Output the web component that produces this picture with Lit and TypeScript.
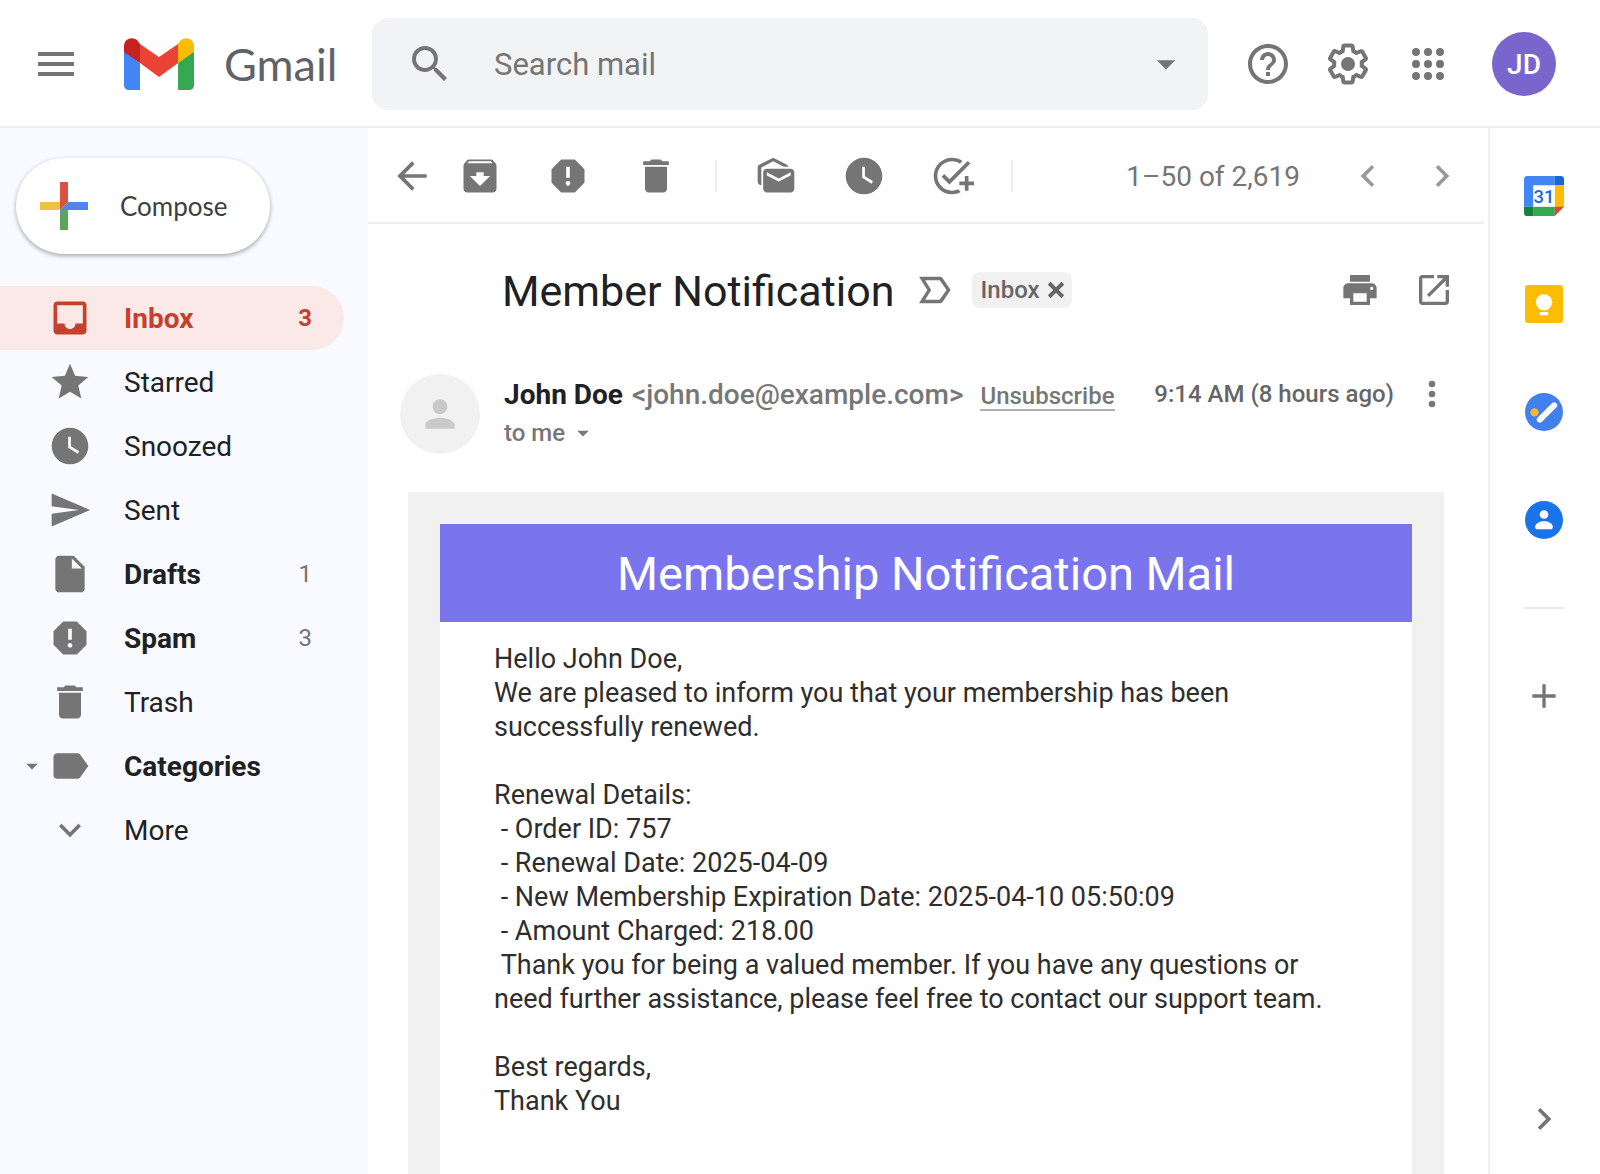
import { LitElement, html, svg, css, nothing, type TemplateResult } from "lit";
import { customElement, property } from "lit/decorators.js";

const ICONS: Record<string, TemplateResult> = {
  menu: svg`<path d="M3 18h18v-2H3v2zm0-5h18v-2H3v2zm0-7v2h18V6H3z"/>`,
  search: svg`<path d="M15.5 14h-.79l-.28-.27A6.47 6.47 0 0 0 16 9.5 6.5 6.5 0 1 0 9.5 16c1.61 0 3.09-.59 4.23-1.57l.27.28v.79l5 4.99L20.49 19l-4.99-5zm-6 0C7.01 14 5 11.99 5 9.5S7.01 5 9.5 5 14 7.01 14 9.5 11.99 14 9.5 14z"/>`,
  caret: svg`<path d="M7 10l5 5 5-5z"/>`,
  help: svg`<path d="M11 18h2v-2h-2v2zm1-16C6.48 2 2 6.48 2 12s4.48 10 10 10 10-4.48 10-10S17.52 2 12 2zm0 18c-4.41 0-8-3.59-8-8s3.59-8 8-8 8 3.59 8 8-3.59 8-8 8zm0-14c-2.21 0-4 1.79-4 4h2c0-1.1.9-2 2-2s2 .9 2 2c0 2-3 1.75-3 5h2c0-2.25 3-2.5 3-5 0-2.21-1.79-4-4-4z"/>`,
  settings: svg`<path d="M13.85 22.25h-3.7c-.74 0-1.36-.54-1.45-1.27l-.27-1.89c-.27-.14-.53-.29-.79-.46l-1.8.72c-.7.26-1.47-.03-1.81-.65L2.2 15.53c-.35-.66-.2-1.44.36-1.88l1.53-1.19c-.01-.15-.02-.3-.02-.46 0-.15.01-.31.02-.46l-1.52-1.19c-.59-.45-.74-1.26-.37-1.88l1.85-3.19c.34-.62 1.11-.9 1.79-.63l1.81.73c.26-.17.52-.32.78-.46l.27-1.91c.09-.7.71-1.25 1.44-1.25h3.7c.74 0 1.36.54 1.45 1.27l.27 1.89c.27.14.53.29.79.46l1.8-.72c.71-.26 1.48.03 1.82.65l1.84 3.18c.36.66.2 1.44-.36 1.88l-1.52 1.19c.01.15.02.3.02.46s-.01.31-.02.46l1.52 1.19c.56.45.72 1.23.37 1.86l-1.86 3.22c-.34.62-1.11.9-1.8.63l-1.8-.72c-.26.17-.52.32-.78.46l-.27 1.91c-.1.68-.72 1.22-1.46 1.22zm-3.23-2h2.76l.37-2.55.53-.22c.44-.18.88-.44 1.34-.78l.45-.34 2.38.96 1.38-2.4-2.03-1.58.07-.56c.03-.26.06-.51.06-.78s-.03-.53-.06-.78l-.07-.56 2.03-1.58-1.39-2.4-2.39.96-.45-.35c-.42-.32-.87-.58-1.33-.77l-.52-.22-.37-2.55h-2.76l-.37 2.55-.53.21c-.44.19-.88.44-1.34.79l-.45.33-2.38-.95-1.39 2.39 2.03 1.58-.07.56a7 7 0 0 0-.06.79c0 .26.02.53.06.78l.07.56-2.03 1.58 1.38 2.4 2.39-.96.45.35c.43.33.86.58 1.33.77l.53.22.38 2.55z"/><circle cx="12" cy="12" r="3.5"/>`,
  apps: svg`${[6, 12, 18].map((y) => [6, 12, 18].map((x) => svg`<circle cx=${x} cy=${y} r="2"/>`))}`,
  inbox: svg`<path d="M19 3H5c-1.1 0-2 .9-2 2v14c0 1.1.89 2 2 2h14c1.1 0 2-.9 2-2V5c0-1.1-.9-2-2-2zm0 12h-4c0 1.66-1.35 3-3 3s-3-1.34-3-3H5V5h14v10z"/>`,
  star: svg`<path d="M12 17.27L18.18 21l-1.64-7.03L22 9.24l-7.19-.61L12 2 9.19 8.63 2 9.24l5.46 4.73L5.82 21z"/>`,
  clock: svg`<path d="M12 2C6.5 2 2 6.5 2 12s4.5 10 10 10 10-4.5 10-10S17.5 2 12 2zm4.2 14.2L11 13V7h1.5v5.2l4.5 2.7-.8 1.3z"/>`,
  send: svg`<path d="M2.01 21L23 12 2.01 3 2 10l15 2-15 2z"/>`,
  draft: svg`<path d="M6 2c-1.1 0-2 .9-2 2v16c0 1.1.9 2 2 2h12c1.1 0 2-.9 2-2V8l-6-6H6zm7 7V3.5L18.5 9H13z"/>`,
  spam: svg`<path d="M15.73 3H8.27L3 8.27v7.46L8.27 21h7.46L21 15.73V8.27L15.73 3zM12 17.3a1.3 1.3 0 1 1 0-2.6 1.3 1.3 0 0 1 0 2.6zm1-4.3h-2V7h2v6z"/>`,
  trash: svg`<path d="M6 19c0 1.1.9 2 2 2h8c1.1 0 2-.9 2-2V7H6v12zM19 4h-3.5l-1-1h-5l-1 1H5v2h14V4z"/>`,
  label: svg`<path d="M17.63 5.84C17.27 5.33 16.67 5 16 5L5 5.01C3.9 5.01 3 5.9 3 7v10c0 1.1.9 1.99 2 1.99L16 19c.67 0 1.27-.33 1.63-.84L22 12l-4.37-6.16z"/>`,
  down: svg`<path d="M16.59 8.59L12 13.17 7.41 8.59 6 10l6 6 6-6z"/>`,
  back: svg`<path d="M20 11H7.83l5.59-5.59L12 4l-8 8 8 8 1.41-1.41L7.83 13H20v-2z"/>`,
  archive: svg`<path d="M20.54 5.23l-1.39-1.68C18.88 3.21 18.47 3 18 3H6c-.47 0-.88.21-1.16.55L3.46 5.23C3.17 5.57 3 6.02 3 6.5V19c0 1.1.9 2 2 2h14c1.1 0 2-.9 2-2V6.5c0-.48-.17-.93-.46-1.27zM12 17.5L6.5 12H10v-2h4v2h3.5L12 17.5zM5.12 5l.81-1h12l.94 1H5.12z"/>`,
  unread: svg`<path d="M18.83 7h-2.6L10.5 4 4 7.4V17c-1.1 0-2-.9-2-2V7.17c0-.53.32-1.09.8-1.34L10.5 2l7.54 3.83c.43.23.73.7.79 1.17z"/><path d="M20 8H7c-1.1 0-2 .9-2 2v9c0 1.1.9 2 2 2h13c1.1 0 2-.9 2-2v-9c0-1.1-.9-2-2-2zm0 3.67L13.5 15 7 11.67V10l6.5 3.33L20 10v1.67z"/>`,
  task: svg`<path d="M22 5.18L10.59 16.6l-4.24-4.24 1.41-1.41 2.83 2.83 10-10L22 5.18zM12 20c-4.41 0-8-3.59-8-8s3.59-8 8-8c1.57 0 3.04.46 4.28 1.25l1.45-1.45A10.02 10.02 0 0 0 12 2C6.48 2 2 6.48 2 12s4.48 10 10 10c1.73 0 3.36-.44 4.78-1.22l-1.5-1.5c-1 .46-2.11.72-3.28.72zm7-5h-3v2h3v3h2v-3h3v-2h-3v-3h-2v3z"/>`,
  left: svg`<path d="M15.41 7.41L14 6l-6 6 6 6 1.41-1.41L10.83 12z"/>`,
  right: svg`<path d="M10 6L8.59 7.41 13.17 12l-4.58 4.59L10 18l6-6z"/>`,
  important: svg`<path fill-rule="evenodd" d="M3 4h12.5c.7 0 1.3.3 1.7.9L22 12l-4.8 7.1c-.4.6-1 .9-1.7.9H3l5-8zm3.7 2.1L10.3 12l-3.6 5.9h8.7l4.1-5.9-4.1-5.9z"/>`,
  close: svg`<path d="M19 7.4L16.6 5 12 9.6 7.4 5 5 7.4 9.6 12 5 16.6 7.4 19l4.6-4.6 4.6 4.6 2.4-2.4-4.6-4.6z"/>`,
  print: svg`<path d="M19 8H5c-1.66 0-3 1.34-3 3v6h4v4h12v-4h4v-6c0-1.66-1.34-3-3-3zm-3 11H8v-5h8v5zm3-7c-.55 0-1-.45-1-1s.45-1 1-1 1 .45 1 1-.45 1-1 1zm-1-9H6v4h12V3z"/>`,
  open: svg`<path d="M19 19H5V5h7V3H5c-1.11 0-2 .9-2 2v14c0 1.1.89 2 2 2h14c1.1 0 2-.9 2-2v-7h-2v7zM14 3v2h3.59l-9.83 9.83 1.41 1.41L19 6.41V10h2V3h-7z"/>`,
  more: svg`<circle cx="12" cy="6" r="2"/><circle cx="12" cy="12" r="2"/><circle cx="12" cy="18" r="2"/>`,
  person: svg`<path d="M12 12c2.21 0 4-1.79 4-4s-1.79-4-4-4-4 1.79-4 4 1.79 4 4 4zm0 2c-2.67 0-8 1.34-8 4v2h16v-2c0-2.66-5.33-4-8-4z"/>`,
  plus: svg`<path d="M19 13h-6v6h-2v-6H5v-2h6V5h2v6h6v2z"/>`,
  compose: svg`<path fill="#db5044" d="M10 0h4v10l-4 4z"/><path fill="#f1bf42" d="M0 10h10v4H0z"/><path fill="#58a55c" d="M10 14h4v10h-4z"/><path fill="#5086ec" d="M14 10h10v4H10z"/>`,
  calendar: svg`<path fill="#fff" d="M5 5h14v14H5z"/><path fill="#4285f4" d="M2 0h16.5v5.5h-13v13H0V2a2 2 0 0 1 2-2z"/><path fill="#1967d2" d="M18.5 0H22a2 2 0 0 1 2 2v3.5h-5.5z"/><path fill="#fbbc04" d="M18.5 5.5H24v13h-5.5z"/><path fill="#34a853" d="M5.5 18.5h13V24h-13z"/><path fill="#188038" d="M0 18.5h5.5V24H2a2 2 0 0 1-2-2z"/><path fill="#ea4335" d="M18.5 18.5H24L18.5 24z"/><text x="12" y="16" text-anchor="middle" font-family="Roboto, sans-serif" font-size="11" font-weight="500" fill="#1967d2">31</text>`,
  keep: svg`<rect x=".6" y=".6" width="22.8" height="22.8" rx="2" fill="#fbbc04"/><circle cx="12" cy="11" r="4.9" fill="#fff"/><path fill="#fff" d="M9.5 13h5v2.4h-5zM9.5 16.8h5v2h-5z"/>`,
  tasks: svg`<circle cx="12" cy="12" r="11.4" fill="#4380ee"/><path d="M9.5 16.6l8.6-8.6" stroke="#fff" stroke-width="3.6" stroke-linecap="round"/><circle cx="6.3" cy="12.2" r="2.5" fill="#f4b92a"/>`,
  contacts: svg`<circle cx="12" cy="12" r="11.4" fill="#1a73e8"/><circle cx="12" cy="8.7" r="2.6" fill="#fff"/><path fill="#fff" d="M6.7 16.2c0-2.4 3-3.5 5.3-3.5s5.3 1.1 5.3 3.5c0 .9-.5 1.4-1.3 1.4H8c-.8 0-1.3-.5-1.3-1.4z"/>`,
};

@customElement("ui-icon")
export class UiIcon extends LitElement {
  @property() name = "";

  static styles = css`
    :host {
      display: block;
      flex: none;
      width: 44px;
      height: 44px;
    }
    .glyph {
      display: block;
      width: 100%;
      height: 100%;
      fill: currentColor;
    }
  `;

  render() {
    return html`<svg class="glyph" viewBox="0 0 24 24" aria-hidden="true">${ICONS[this.name] ?? nothing}</svg>`;
  }
}

interface Folder {
  label: string;
  icon: string;
  count?: number;
  bold?: boolean;
  active?: boolean;
  caret?: boolean;
}

const FOLDERS: Folder[] = [
  { label: "Inbox", icon: "inbox", count: 3, bold: true, active: true },
  { label: "Starred", icon: "star" },
  { label: "Snoozed", icon: "clock" },
  { label: "Sent", icon: "send" },
  { label: "Drafts", icon: "draft", count: 1, bold: true },
  { label: "Spam", icon: "spam", count: 3, bold: true },
  { label: "Trash", icon: "trash" },
  { label: "Categories", icon: "label", bold: true, caret: true },
  { label: "More", icon: "down" },
];

const BODY = `Hello John Doe,
We are pleased to inform you that your membership has been successfully renewed.

Renewal Details:
 - Order ID: 757
 - Renewal Date: 2025-04-09
 - New Membership Expiration Date: 2025-04-10 05:50:09
 - Amount Charged: 218.00
 Thank you for being a valued member. If you have any questions or need further assistance, please feel free to contact our support team.

Best regards,
Thank You`;

@customElement("app-root")
export class AppRoot extends LitElement {
  static styles = css`
    :host {
      display: flex;
      flex-direction: column;
      height: 100vh;
      overflow: hidden;
      background: #fff;
      color: #202124;
      font: 400 28px/34px Roboto, sans-serif;
    }
    * {
      box-sizing: border-box;
    }
    button,
    input {
      display: block;
      margin: 0;
      padding: 0;
      border: 0;
      background: none;
      color: inherit;
      font: inherit;
    }
    button {
      cursor: pointer;
    }
    a {
      color: inherit;
      text-decoration: none;
    }
    h1,
    h2,
    p,
    ul {
      margin: 0;
      padding: 0;
      font-weight: 400;
      list-style: none;
    }
    .size-28 {
      width: 28px;
      height: 28px;
    }
    .size-40 {
      width: 40px;
      height: 40px;
    }
    .size-48 {
      width: 48px;
      height: 48px;
    }

    .header {
      flex: none;
      display: flex;
      align-items: center;
      height: 128px;
      padding: 2px 44px 0 32px;
      border-bottom: 2px solid #eeefef;
      color: #757575;
    }
    .brand {
      display: flex;
      align-items: center;
      gap: 30px;
      width: 248px;
      margin-left: 44px;
      color: #5f6368;
      font: 400 45px/56px Lato, sans-serif;
    }
    .logo {
      width: 70px;
      height: 52px;
    }
    .search {
      flex: 1;
      display: flex;
      align-items: center;
      height: 92px;
      padding: 0 20px 0 34px;
      border-radius: 16px;
      background: #f1f3f4;
    }
    .query {
      flex: 1;
      min-width: 0;
      height: 48px;
      margin-left: 40px;
      font-size: 31px;
    }
    .query::placeholder {
      color: #757575;
      opacity: 1;
    }
    .tools {
      display: flex;
      gap: 32px;
      margin: 0 40px 0 36px;
    }
    .me {
      width: 64px;
      height: 64px;
      padding-top: 2px;
      border-radius: 50%;
      background: #7966cc;
      color: #fff;
      font-weight: 500;
      text-align: center;
    }

    .columns {
      flex: 1;
      min-height: 0;
      display: flex;
    }
    .sidebar {
      flex: none;
      width: 368px;
      padding-top: 30px;
      background: #f9faff;
    }
    .compose {
      display: flex;
      align-items: center;
      gap: 32px;
      height: 96px;
      margin: 0 0 32px 16px;
      padding: 0 42px 0 24px;
      border-radius: 48px;
      background: #fff;
      box-shadow: 0 2px 4px rgba(60, 64, 67, 0.36), 0 1px 4px rgba(60, 64, 67, 0.12);
      color: #3c4043;
      font-family: Lato, sans-serif;
      font-size: 26px;
    }
    .folder {
      display: flex;
      align-items: center;
      width: 344px;
      height: 64px;
      padding-right: 32px;
      border-radius: 0 32px 32px 0;
    }
    .folder.active {
      background: #fae9e7;
      color: #c5402f;
    }
    .lead {
      display: flex;
      align-items: center;
      justify-content: flex-end;
      gap: 2px;
      width: 92px;
      color: #757575;
    }
    .active .lead {
      color: inherit;
    }
    .name {
      flex: 1;
      margin-left: 32px;
      padding-top: 2px;
    }
    .bold .name,
    .active .count {
      font-weight: 700;
    }
    .count {
      color: #757575;
      font-size: 24px;
    }
    .active .count {
      color: inherit;
    }

    .main {
      flex: 1;
      min-width: 0;
      display: flex;
      flex-direction: column;
    }
    .toolbar {
      flex: none;
      display: flex;
      align-items: center;
      height: 96px;
      margin-right: 4px;
      padding: 2px 20px 0 22px;
      border-bottom: 2px solid #eeefef;
      color: #757575;
    }
    .group {
      display: flex;
      gap: 44px;
      padding: 0 37px;
      border-right: 2px solid #eeeeee;
    }
    .group.first {
      padding-left: 24px;
    }
    .bar {
      display: flex;
      align-items: center;
      height: 32px;
    }
    .range {
      margin-left: auto;
      padding-top: 2px;
    }
    .pager {
      display: flex;
      gap: 30px;
      margin-left: 46px;
      color: #9a9a9a;
    }

    .subject {
      flex: none;
      display: flex;
      align-items: center;
      height: 132px;
      padding: 0 34px 0 134px;
      color: #757575;
    }
    .title {
      padding-top: 2px;
      color: #202124;
      font-size: 43px;
      line-height: 52px;
    }
    .flag {
      margin: 0 18px 0 20px;
    }
    .chip {
      display: flex;
      align-items: center;
      gap: 2px;
      height: 36px;
      padding: 0 2px 0 8px;
      border-radius: 8px;
      background: #f1f1f1;
      color: #666;
      font-size: 24px;
      font-weight: 500;
      line-height: 28px;
    }
    .actions {
      display: flex;
      gap: 34px;
      margin-left: auto;
    }

    .sender {
      flex: none;
      display: flex;
      align-items: flex-start;
      height: 136px;
      padding: 18px 36px 0 32px;
      color: #777;
      font-weight: 500;
    }
    .photo {
      flex: none;
      display: grid;
      place-items: center;
      width: 80px;
      height: 80px;
      margin-right: 24px;
      border-radius: 50%;
      background: #f1f1f1;
      color: #c9c9c9;
    }
    .who {
      flex: 1;
      min-width: 0;
    }
    .line {
      display: flex;
      align-items: baseline;
      gap: 9px;
      height: 42px;
      padding-top: 4px;
      white-space: nowrap;
    }
    .from {
      color: #202124;
      font-weight: 700;
    }
    .small {
      font-size: 24px;
    }
    .unsubscribe {
      margin-left: 8px;
      border-bottom: 2px solid #b0b0b0;
      line-height: 26px;
    }
    .time {
      flex: none;
      padding-top: 3px;
      color: #666;
    }
    .to {
      display: flex;
      align-items: center;
      gap: 4px;
    }
    .menu {
      margin-left: 18px;
    }

    .mail {
      flex: 1;
      min-height: 0;
      overflow: hidden;
      display: flex;
      margin: 0 44px 0 40px;
      padding: 32px 32px 0;
      background: #f1f1f1;
    }
    .letter {
      flex: 1;
      background: #fff;
    }
    .banner {
      padding: 22px 0 20px;
      background: #7b75ed;
      color: #fff;
      font-size: 47px;
      line-height: 56px;
      text-align: center;
    }
    .text {
      padding: 20px 54px;
      color: #2e2e2e;
      font-size: 27px;
      white-space: pre-wrap;
    }

    .rail {
      flex: none;
      display: flex;
      flex-direction: column;
      align-items: center;
      width: 112px;
      padding: 48px 2px 33px 0;
      border-left: 2px solid #eeefef;
      color: #757575;
    }
    .apps {
      display: flex;
      flex-direction: column;
      gap: 68px;
      padding-bottom: 67px;
      border-bottom: 2px solid #e8e8e8;
    }
    .add {
      margin-top: 67px;
    }
    .collapse {
      margin-top: auto;
    }
  `;

  private button(icon: string, label: string, size = "") {
    return html`<button type="button" aria-label=${label}><ui-icon class=${size} name=${icon}></ui-icon></button>`;
  }

  private header() {
    return html`
      <header class="header">
        ${this.button("menu", "Main menu", "size-48")}
        <a class="brand" href="#inbox">
          <svg class="logo" viewBox="0 0 70 52" aria-hidden="true">
            <path fill="#4285f4" d="M0 13l16 12v27H5c-3 0-5-2-5-5z" />
            <path fill="#34a853" d="M54 25l16-12v34c0 3-2 5-5 5H54z" />
            <path fill="#ea4335" d="M16 6l19 13L54 6v19L35 39 16 25z" />
            <path fill="#c5221f" d="M0 14V8c0-7 8-10 13.5-5.5L16 6v19L0 14z" />
            <path fill="#fbbc04" d="M70 14V8c0-7-8-10-13.5-5.5L54 6v19l16-11z" />
          </svg>
          <span>Gmail</span>
        </a>
        <form class="search" role="search">
          ${this.button("search", "Search", "size-48")}
          <input class="query" type="text" aria-label="Search mail" placeholder="Search mail" />
          ${this.button("caret", "Search options")}
        </form>
        <div class="tools">
          ${this.button("help", "Support", "size-48")} ${this.button("settings", "Settings", "size-48")}
          ${this.button("apps", "Apps", "size-48")}
        </div>
        <button class="me" type="button">JD</button>
      </header>
    `;
  }

  private folder(f: Folder) {
    return html`
      <li>
        <a class="folder ${f.active ? "active" : ""} ${f.bold ? "bold" : ""}" href="#${f.label.toLowerCase()}">
          <span class="lead">
            ${f.caret ? html`<ui-icon class="size-28" name="caret"></ui-icon>` : nothing}
            <ui-icon name=${f.icon}></ui-icon>
          </span>
          <span class="name">${f.label}</span>
          ${f.count ? html`<span class="count">${f.count}</span>` : nothing}
        </a>
      </li>
    `;
  }

  private toolbar() {
    return html`
      <div class="toolbar" role="toolbar" aria-label="Message actions">
        ${this.button("back", "Back to inbox")}
        <div class="bar">
          <div class="group first bar">
            ${this.button("archive", "Archive")} ${this.button("spam", "Report spam")} ${this.button("trash", "Delete")}
          </div>
          <div class="group bar">
            ${this.button("unread", "Mark as unread")} ${this.button("clock", "Snooze")}
            ${this.button("task", "Add to tasks")}
          </div>
        </div>
        <span class="range">1–50 of 2,619</span>
        <div class="pager">${this.button("left", "Newer")} ${this.button("right", "Older")}</div>
      </div>
    `;
  }

  render() {
    return html`
      ${this.header()}
      <div class="columns">
        <aside class="sidebar">
          <button class="compose" type="button"><ui-icon class="size-48" name="compose"></ui-icon>Compose</button>
          <nav aria-label="Folders">
            <ul>
              ${FOLDERS.map((f) => this.folder(f))}
            </ul>
          </nav>
        </aside>
        <main class="main">
          ${this.toolbar()}
          <div class="subject">
            <h1 class="title">Member Notification</h1>
            <ui-icon class="flag size-40" name="important"></ui-icon>
            <span class="chip">Inbox ${this.button("close", "Remove label Inbox", "size-28")}</span>
            <div class="actions">
              ${this.button("print", "Print", "size-40")} ${this.button("open", "Open in new window", "size-40")}
            </div>
          </div>
          <div class="sender">
            <span class="photo"><ui-icon name="person"></ui-icon></span>
            <div class="who">
              <div class="line">
                <span class="from">John Doe</span>
                <span>&lt;john.doe@example.com&gt;</span>
                <a class="unsubscribe small" href="#unsubscribe">Unsubscribe</a>
              </div>
              <button class="to small" type="button">to me <ui-icon class="size-28" name="caret"></ui-icon></button>
            </div>
            <span class="time small">9:14 AM (8 hours ago)</span>
            <div class="menu">${this.button("more", "More options", "size-40")}</div>
          </div>
          <div class="mail">
            <article class="letter">
              <h2 class="banner">Membership Notification Mail</h2>
              <p class="text">${BODY}</p>
            </article>
          </div>
        </main>
        <aside class="rail">
          <div class="apps">
            ${this.button("calendar", "Calendar", "size-40")} ${this.button("keep", "Keep", "size-40")}
            ${this.button("tasks", "Tasks", "size-40")} ${this.button("contacts", "Contacts", "size-40")}
          </div>
          <div class="add">${this.button("plus", "Get add-ons", "size-40")}</div>
          <div class="collapse">${this.button("right", "Hide side panel")}</div>
        </aside>
      </div>
    `;
  }
}
